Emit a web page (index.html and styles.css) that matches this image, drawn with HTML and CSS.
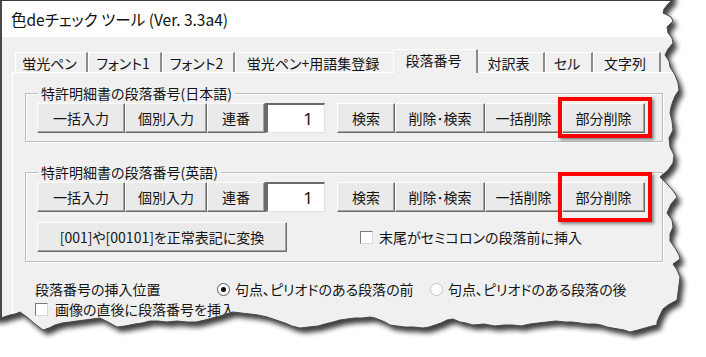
FILE: index.html
```html
<!DOCTYPE html>
<html lang="ja">
<head>
<meta charset="utf-8">
<title>色deチェック ツール</title>
<link rel="stylesheet" href="styles.css">
</head>
<body>
<div class="window">
  <div class="titlebar">色deチェック ツール (Ver. 3.3a4)</div>
  <div class="client">
    <div class="tabs">
      <div class="tab">蛍光ペン</div>
      <div class="tab">フォント1</div>
      <div class="tab">フォント2</div>
      <div class="tab">蛍光ペン+用語集登録</div>
      <div class="tab tab-active">段落番号</div>
      <div class="tab">対訳表</div>
      <div class="tab">セル</div>
      <div class="tab">文字列</div>
    </div>
    <div class="panel">
      <fieldset class="group">
        <legend>特許明細書の段落番号(日本語)</legend>
        <div class="btn-row">
          <button class="btn">一括入力</button>
          <button class="btn">個別入力</button>
          <button class="btn">連番</button>
          <div class="num-box">1</div>
          <button class="btn">検索</button>
          <button class="btn">削除･検索</button>
          <button class="btn">一括削除</button>
          <button class="btn btn-marked">部分削除</button>
        </div>
      </fieldset>
      <fieldset class="group group-en">
        <legend>特許明細書の段落番号(英語)</legend>
        <div class="btn-row">
          <button class="btn">一括入力</button>
          <button class="btn">個別入力</button>
          <button class="btn">連番</button>
          <div class="num-box">1</div>
          <button class="btn">検索</button>
          <button class="btn">削除･検索</button>
          <button class="btn">一括削除</button>
          <button class="btn btn-marked btn-marked-tall">部分削除</button>
        </div>
        <div class="sub-row">
          <button class="btn btn-wide">[001]や[00101]を正常表記に変換</button>
          <label class="check check-semicolon"><span class="box"></span>末尾がセミコロンの段落前に挿入</label>
        </div>
      </fieldset>
      <div class="options">
        <div class="position-row">
          <span class="position-label">段落番号の挿入位置</span>
          <label class="radio"><span class="dot dot-on"></span>句点、ピリオドのある段落の前</label>
          <label class="radio"><span class="dot"></span>句点、ピリオドのある段落の後</label>
        </div>
        <label class="check check-image"><span class="box"></span>画像の直後に段落番号を挿入</label>
      </div>
    </div>
  </div>
</div>
<svg class="torn" width="706" height="357" viewBox="0 0 706 357" aria-hidden="true">
  <defs>
    <clipPath id="outside">
      <path clip-rule="evenodd" d="M-10 -10H716V367H-10Z M0 0 L672 0 L668 4 664 9 663 13 671 17 673 21 667 27 668 33 672 38 673 43 668 49 665 55 669 61 670 67 675 75 678 83 679 90 675 96 673 101 671 107 670 113 672 121 673 130 669 138 670 147 674 155 673 163 668 170 660 177 668 185 674 192 677 197 671 204 667 213 672 220 673 227 670 234 670 241 675 248 679 255 680 259 673 264 677 270 680 277 679 285 678 293 677 300 668 305 663 309 660 315 657 322 657 325 652 326 645 328 638 330 630 332 624 330 618 329 607 327 601 325 595 324 587 324 580 323 572 322 565 322 556 321 547 322 538 323 530 324 521 326 513 325 504 325 495 326 484 324 473 325 466 323 460 322 453 319 447 320 441 323 435 325 429 327 423 328 414 327 405 327 397 326 390 325 385 322 380 320 375 318 370 317 362 318 355 318 347 319 340 320 333 322 325 324 318 326 309 327 300 328 292 326 285 323 276 320 267 317 258 315 250 314 241 313 233 312 226 314 220 316 212 318 205 320 196 322 187 322 177 321 167 322 158 321 150 321 142 323 135 324 125 326 117 327 108 322 100 318 92 319 85 320 77 321 70 322 62 323 55 325 49 328 43 330 39 327 35 324 27 317 20 312 15 314 10 315 4 317 0 318 Z"/>
    </clipPath>
    <filter id="soft" x="-10%" y="-10%" width="120%" height="120%">
      <feGaussianBlur stdDeviation="2.4"/>
    </filter>
  </defs>
  <path fill="#ffffff" fill-rule="evenodd" d="M-10 -10H716V367H-10Z M0 0 L672 0 L668 4 664 9 663 13 671 17 673 21 667 27 668 33 672 38 673 43 668 49 665 55 669 61 670 67 675 75 678 83 679 90 675 96 673 101 671 107 670 113 672 121 673 130 669 138 670 147 674 155 673 163 668 170 660 177 668 185 674 192 677 197 671 204 667 213 672 220 673 227 670 234 670 241 675 248 679 255 680 259 673 264 677 270 680 277 679 285 678 293 677 300 668 305 663 309 660 315 657 322 657 325 652 326 645 328 638 330 630 332 624 330 618 329 607 327 601 325 595 324 587 324 580 323 572 322 565 322 556 321 547 322 538 323 530 324 521 326 513 325 504 325 495 326 484 324 473 325 466 323 460 322 453 319 447 320 441 323 435 325 429 327 423 328 414 327 405 327 397 326 390 325 385 322 380 320 375 318 370 317 362 318 355 318 347 319 340 320 333 322 325 324 318 326 309 327 300 328 292 326 285 323 276 320 267 317 258 315 250 314 241 313 233 312 226 314 220 316 212 318 205 320 196 322 187 322 177 321 167 322 158 321 150 321 142 323 135 324 125 326 117 327 108 322 100 318 92 319 85 320 77 321 70 322 62 323 55 325 49 328 43 330 39 327 35 324 27 317 20 312 15 314 10 315 4 317 0 318 Z"/>
  <g clip-path="url(#outside)">
    <path class="torn-shadow" filter="url(#soft)" transform="translate(4 5)" d="M-20 -20 L672 -20 L672 0 L668 4 664 9 663 13 671 17 673 21 667 27 668 33 672 38 673 43 668 49 665 55 669 61 670 67 675 75 678 83 679 90 675 96 673 101 671 107 670 113 672 121 673 130 669 138 670 147 674 155 673 163 668 170 660 177 668 185 674 192 677 197 671 204 667 213 672 220 673 227 670 234 670 241 675 248 679 255 680 259 673 264 677 270 680 277 679 285 678 293 677 300 668 305 663 309 660 315 657 322 657 325 652 326 645 328 638 330 630 332 624 330 618 329 607 327 601 325 595 324 587 324 580 323 572 322 565 322 556 321 547 322 538 323 530 324 521 326 513 325 504 325 495 326 484 324 473 325 466 323 460 322 453 319 447 320 441 323 435 325 429 327 423 328 414 327 405 327 397 326 390 325 385 322 380 320 375 318 370 317 362 318 355 318 347 319 340 320 333 322 325 324 318 326 309 327 300 328 292 326 285 323 276 320 267 317 258 315 250 314 241 313 233 312 226 314 220 316 212 318 205 320 196 322 187 322 177 321 167 322 158 321 150 321 142 323 135 324 125 326 117 327 108 322 100 318 92 319 85 320 77 321 70 322 62 323 55 325 49 328 43 330 39 327 35 324 27 317 20 312 15 314 10 315 4 317 0 318 L-20 318 Z"/>
  </g>
  <path class="torn-edge" d="M672 0 L668 4 664 9 663 13 671 17 673 21 667 27 668 33 672 38 673 43 668 49 665 55 669 61 670 67 675 75 678 83 679 90 675 96 673 101 671 107 670 113 672 121 673 130 669 138 670 147 674 155 673 163 668 170 660 177 668 185 674 192 677 197 671 204 667 213 672 220 673 227 670 234 670 241 675 248 679 255 680 259 673 264 677 270 680 277 679 285 678 293 677 300 668 305 663 309 660 315 657 322 657 325 652 326 645 328 638 330 630 332 624 330 618 329 607 327 601 325 595 324 587 324 580 323 572 322 565 322 556 321 547 322 538 323 530 324 521 326 513 325 504 325 495 326 484 324 473 325 466 323 460 322 453 319 447 320 441 323 435 325 429 327 423 328 414 327 405 327 397 326 390 325 385 322 380 320 375 318 370 317 362 318 355 318 347 319 340 320 333 322 325 324 318 326 309 327 300 328 292 326 285 323 276 320 267 317 258 315 250 314 241 313 233 312 226 314 220 316 212 318 205 320 196 322 187 322 177 321 167 322 158 321 150 321 142 323 135 324 125 326 117 327 108 322 100 318 92 319 85 320 77 321 70 322 62 323 55 325 49 328 43 330 39 327 35 324 27 317 20 312 15 314 10 315 4 317 0 318"/>
</svg>
</body>
</html>
```

FILE: styles.css
```css
* { box-sizing: border-box; }

body {
  margin: 0;
  background: #ffffff;
  font-family: "Noto Sans CJK JP", "Noto Sans", sans-serif;
  font-size: 14px;
  color: #141414;
  font-feature-settings: "palt";
}

.window {
  width: 706px;
  height: 357px;
  overflow: hidden;
  background: #f0f0f0;
  border-top: 1px solid #3a3a3a;
  border-left: 2px solid #484848;
}

.titlebar {
  height: 36px;
  background: #ffffff;
  display: flex;
  align-items: center;
  padding-left: 9px;
  font-size: 15.5px;
  color: #101010;
}

.client {
  padding-top: 12px;
}

.tabs {
  display: grid;
  grid-template-columns: 73px 74px 73px 160px 81px 69px 48px 68px;
  margin-left: 13px;
  height: 23px;
  align-items: end;
  position: relative;
  z-index: 2;
}

.tab {
  height: 20px;
  border-top: 1px solid #ffffff;
  border-left: 1px solid #ffffff;
  border-right: 2px solid #8c8c8c;
  display: flex;
  align-items: center;
  justify-content: center;
  padding-right: 3px;
  line-height: 1;
  white-space: nowrap;
}

.tab-active {
  height: 24px;
  margin: 0 -2px -1px -2px;
  background: #f0f0f0;
  align-items: flex-start;
  padding-top: 3px;
  position: relative;
  z-index: 3;
}

.panel {
  margin-left: 10px;
  border-top: 1px solid #ffffff;
  border-left: 1px solid #ffffff;
  padding: 12px 0 0 12px;
  height: 300px;
}

.group {
  margin: 0;
  width: 638px;
  border: 1px solid #bcbcbc;
  box-shadow: inset 1px 1px 0 #ffffff, 1px 1px 0 #ffffff;
  padding: 2px 0 8px 11px;
}

.group legend {
  margin-left: 1px;
  padding: 0 3px;
  line-height: 16px;
  height: 16px;
}

.group-en {
  margin-top: 22px;
  padding-bottom: 9px;
}

.btn-row {
  display: grid;
  grid-template-columns: 88px 82px 58px 72px 58px 90px 77px 83px;
  height: 30px;
}

.btn {
  font: inherit;
  color: inherit;
  font-feature-settings: "palt";
  height: 30px;
  margin: 0;
  padding: 0;
  background: #eaeaea;
  border: 1px solid;
  border-color: #ffffff #6c6c6c #6c6c6c #ffffff;
  box-shadow: inset -1px -1px 0 #a3a3a3;
  white-space: nowrap;
  line-height: 1;
}

.btn-marked {
  position: relative;
}

.btn-marked::after {
  content: "";
  position: absolute;
  top: -7px;
  left: -5px;
  right: -8px;
  bottom: -6px;
  border: 4px solid #ff0000;
  box-shadow: 2px 2px 3px rgba(0, 0, 0, 0.45);
}

.btn-marked-tall::after {
  top: -11px;
  bottom: -11px;
}

.num-box {
  width: 60px;
  height: 30px;
  background: #ffffff;
  border-style: solid;
  border-width: 2px 1px 1px 3px;
  border-color: #6a6a6a #e2e2e2 #e2e2e2 #6a6a6a;
  text-align: right;
  padding-right: 11px;
  font-family: "Noto Sans", "Noto Sans CJK JP", sans-serif;
  font-size: 17px;
  line-height: 27px;
}

.sub-row {
  display: flex;
  align-items: center;
  margin-top: 10px;
}

.btn-wide {
  width: 250px;
}

.check {
  display: flex;
  align-items: center;
  gap: 7px;
  line-height: 16px;
}

.check-semicolon {
  margin-left: 73px;
  gap: 6px;
}

.check-image {
  height: 18px;
}

.box {
  width: 13px;
  height: 13px;
  background: #ffffff;
  border: 1px solid;
  border-color: #7a7a7a #d8d8d8 #d8d8d8 #7a7a7a;
  flex: none;
}

.options {
  margin: 16px 0 0 10px;
}

.position-row {
  display: grid;
  grid-template-columns: 182px 213px auto;
  align-items: center;
  height: 22px;
  line-height: 18px;
}

.radio {
  display: flex;
  align-items: center;
  gap: 5px;
}

.dot {
  width: 13px;
  height: 13px;
  border-radius: 50%;
  background: #ffffff;
  border: 1px solid #c4c4c4;
  flex: none;
  display: flex;
  align-items: center;
  justify-content: center;
}

.dot-on {
  border-color: #5a5a5a;
}

.dot-on::after {
  content: "";
  width: 5px;
  height: 5px;
  border-radius: 50%;
  background: #111111;
}

.torn {
  position: absolute;
  left: 0;
  top: 0;
}

.torn-shadow {
  fill: #1e1e1e;
  opacity: 0.85;
}

.torn-edge {
  fill: none;
  stroke: #4a4a4a;
  stroke-width: 1;
}
```
